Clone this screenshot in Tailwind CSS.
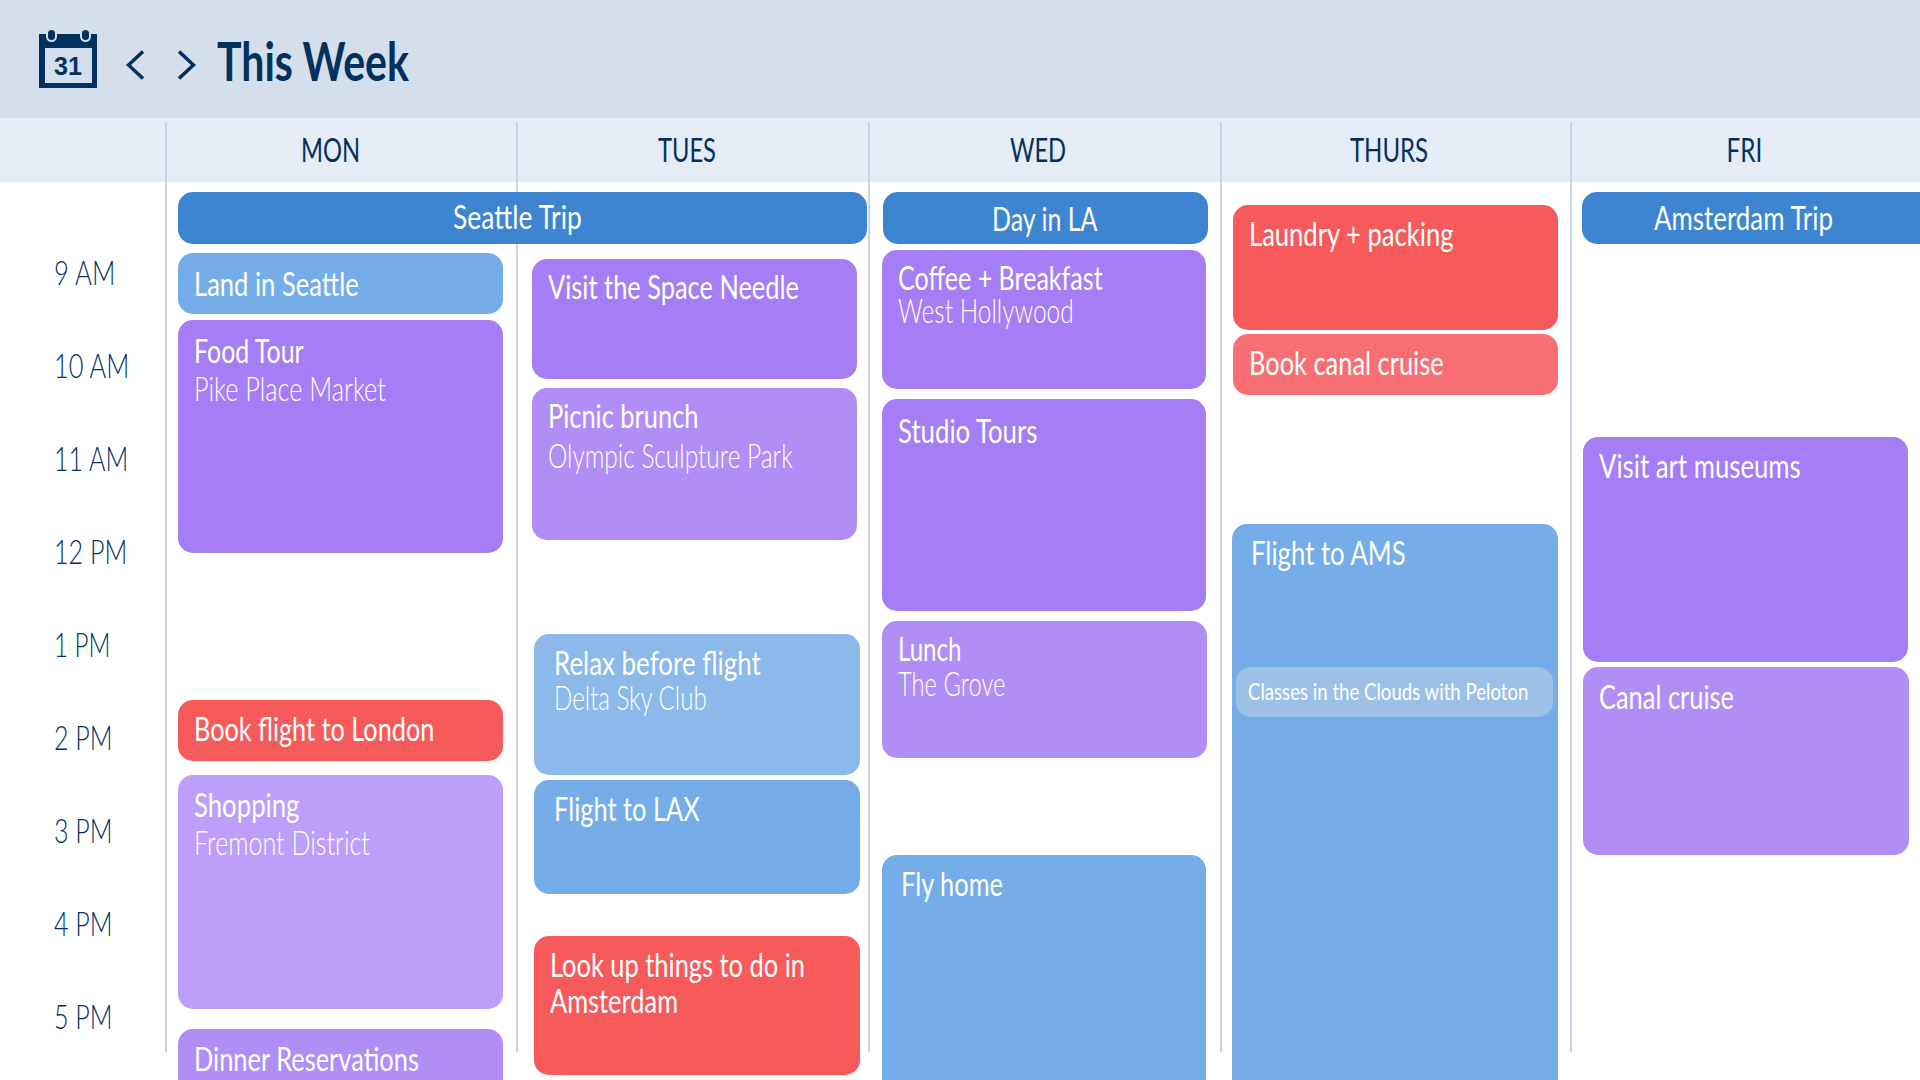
<!DOCTYPE html>
<html lang="en">
<head>
    <meta charset="UTF-8">
    <meta name="viewport" content="width=device-width, initial-scale=1.0">
    <title>This Week</title>
    <script src="https://cdn.jsdelivr.net/npm/@tailwindcss/browser@4"></script>
</head>
<body class="w-[1920px] h-[1080px] overflow-hidden bg-white relative font-['Lato','Open_Sans',sans-serif] text-[33px] leading-[36px] text-white">

    <!-- top bar -->
    <header class="h-[118px] bg-[#d5dfeb] flex items-center pl-[39px] text-[#03315f]">
        <svg width="58" height="60" viewBox="0 0 58 60">
            <rect x="0" y="5" width="58" height="54" fill="#03315f"/>
            <rect x="6" y="19" width="47" height="35" fill="#d5dfeb"/>
            <rect x="8" y="0" width="9" height="12" rx="4.5" fill="#03315f" stroke="#d5dfeb" stroke-width="2"/>
            <rect x="42" y="0" width="9" height="12" rx="4.5" fill="#03315f" stroke="#d5dfeb" stroke-width="2"/>
            <text x="29" y="46" text-anchor="middle" font-family="Liberation Sans" font-weight="700" font-size="25" fill="#03315f">31</text>
        </svg>
        <svg width="18" height="30" viewBox="0 0 18 30" class="ml-[29px] mt-[12px]"><path d="M17 1.5 2.5 15 17 28.5" fill="none" stroke="#03315f" stroke-width="3.5"/></svg>
        <svg width="18" height="30" viewBox="0 0 18 30" class="ml-[34px] mt-[12px]"><path d="M1 1.5 15.5 15 1 28.5" fill="none" stroke="#03315f" stroke-width="3.5"/></svg>
        <h1 class="ml-[21px] mt-[4px] text-[54px] leading-none font-bold whitespace-nowrap origin-left scale-x-[0.76]">This Week</h1>
    </header>

    <!-- day names -->
    <div class="h-[64px] bg-[#e5ecf5] grid grid-cols-[166px_351px_352px_352px_350px_349px] items-center text-center text-[#03315f] text-[32px]">
        <div></div>
        <div class="scale-x-[0.74] -translate-x-[11px]">MON</div>
        <div class="scale-x-[0.74] -translate-x-[6px]">TUES</div>
        <div class="scale-x-[0.74] -translate-x-[7px]">WED</div>
        <div class="scale-x-[0.75] -translate-x-[7px]">THURS</div>
        <div class="scale-x-[0.76] -translate-x-[1px]">FRI</div>
    </div>

    <!-- column rules -->
    <div class="absolute left-0 top-[122px] h-[930px] w-full grid grid-cols-[165px_351px_352px_352px_350px_350px] pointer-events-none">
        <div></div>
        <div class="border-l-2 border-[#c9d5e3]"></div>
        <div class="border-l-2 border-[#c9d5e3]"></div>
        <div class="border-l-2 border-[#c9d5e3]"></div>
        <div class="border-l-2 border-[#c9d5e3]"></div>
        <div class="border-l-2 border-[#c9d5e3]"></div>
    </div>

    <!-- calendar body -->
    <main class="relative grid grid-cols-[166px_351px_352px_352px_350px_349px] grid-rows-[62px_auto] h-[898px] overflow-hidden">

        <!-- hours -->
        <div class="row-span-2 pt-[66px] pl-[54px] text-[#03315f] text-[33px] font-light whitespace-nowrap">
            <div class="h-[93px] leading-[48px] origin-left scale-x-[0.78]">9 AM</div>
            <div class="h-[93px] leading-[48px] origin-left scale-x-[0.77]">10 AM</div>
            <div class="h-[93px] leading-[48px] origin-left scale-x-[0.76]">11 AM</div>
            <div class="h-[93px] leading-[48px] origin-left scale-x-[0.76]">12 PM</div>
            <div class="h-[93px] leading-[48px] origin-left scale-x-[0.73]">1 PM</div>
            <div class="h-[93px] leading-[48px] origin-left scale-x-[0.76]">2 PM</div>
            <div class="h-[93px] leading-[48px] origin-left scale-x-[0.76]">3 PM</div>
            <div class="h-[93px] leading-[48px] origin-left scale-x-[0.76]">4 PM</div>
            <div class="h-[93px] leading-[48px] origin-left scale-x-[0.76]">5 PM</div>
        </div>

        <!-- trip banners -->
        <div class="col-span-2 pt-[10px] pl-[12px]">
            <div class="w-[689px] h-[52px] pb-[4px] pr-[11px] rounded-[15px] bg-[#3d85d1] flex items-center justify-center"><span class="whitespace-nowrap scale-x-[0.8]">Seattle Trip</span></div>
        </div>
        <div class="pt-[10px] pl-[14px]">
            <div class="w-[325px] h-[52px] pb-[1px] pr-[1px] rounded-[15px] bg-[#3d85d1] flex items-center justify-center"><span class="whitespace-nowrap scale-x-[0.755]">Day in LA</span></div>
        </div>

        <!-- thursday -->
        <div class="row-span-2 col-start-5 row-start-1 pl-[12px] pt-[23px]">
            <div class="w-[325px] h-[125px] rounded-[15px] bg-[#f75a5b] pl-[16px] pt-[10px]"><p class="whitespace-nowrap origin-left scale-x-[0.775]">Laundry + packing</p></div>
            <div class="w-[325px] h-[61px] mt-[4px] rounded-[15px] bg-[#f76f72] pl-[16px] pt-[10px]"><p class="whitespace-nowrap origin-left scale-x-[0.77]">Book canal cruise</p></div>
            <div class="relative w-[326px] h-[600px] mt-[129px] -ml-[1px] rounded-[15px] bg-[#74ade8] pl-[19px] pt-[10px]">
                <p class="whitespace-nowrap origin-left scale-x-[0.78]">Flight to AMS</p>
                <div class="absolute left-[4px] top-[143px] w-[317px] h-[50px] rounded-[15px] bg-[#9dc1e6] pl-[12px] pt-[8px] text-[24px] leading-[32px]"><p class="whitespace-nowrap origin-left scale-x-[0.775]">Classes in the Clouds with Peloton</p></div>
            </div>
        </div>

        <!-- friday -->
        <div class="row-span-2 col-start-6 row-start-1 pl-[11px] pt-[10px]">
            <div class="w-[360px] h-[52px] pb-[2px] rounded-[15px] bg-[#3d85d1] pl-[72px] flex items-center"><span class="whitespace-nowrap origin-left scale-x-[0.785]">Amsterdam Trip</span></div>
            <div class="w-[325px] h-[225px] mt-[193px] ml-[1px] rounded-[15px] bg-[#a57ef5] pl-[16px] pt-[10px]"><p class="whitespace-nowrap origin-left scale-x-[0.78]">Visit art museums</p></div>
            <div class="w-[326px] h-[188px] mt-[5px] ml-[1px] rounded-[15px] bg-[#b18ef6] pl-[16px] pt-[11px]"><p class="whitespace-nowrap origin-left scale-x-[0.77]">Canal cruise</p></div>
        </div>

        <!-- monday -->
        <div class="col-start-2 row-start-2 pl-[12px] pt-[9px]">
            <div class="w-[325px] h-[61px] rounded-[15px] bg-[#74ade8] pl-[16px] pt-[12px]"><p class="whitespace-nowrap origin-left scale-x-[0.775]">Land in Seattle</p></div>
            <div class="w-[325px] h-[233px] mt-[6px] rounded-[15px] bg-[#a57ef5] pl-[16px] pt-[12px] whitespace-nowrap">
                <p class="origin-left scale-x-[0.755]">Food Tour</p>
                <p class="origin-left scale-x-[0.765] font-light mt-[2px]">Pike Place Market</p>
            </div>
            <div class="w-[325px] h-[61px] mt-[147px] rounded-[15px] bg-[#f75a5b] pl-[16px] pt-[10px]"><p class="whitespace-nowrap origin-left scale-x-[0.765]">Book flight to London</p></div>
            <div class="w-[325px] h-[234px] mt-[14px] rounded-[15px] bg-[#bd9ffb] pl-[16px] pt-[11px] whitespace-nowrap">
                <p class="origin-left scale-x-[0.78]">Shopping</p>
                <p class="origin-left scale-x-[0.76] font-light mt-[2px]">Fremont District</p>
            </div>
            <div class="w-[325px] h-[120px] mt-[20px] rounded-[15px] bg-[#b18ef6] pl-[16px] pt-[11px]"><p class="whitespace-nowrap origin-left scale-x-[0.77]">Dinner Reservations</p></div>
        </div>

        <!-- tuesday -->
        <div class="col-start-3 row-start-2 pl-[15px] pt-[15px]">
            <div class="w-[325px] h-[120px] rounded-[15px] bg-[#a57ef5] pl-[16px] pt-[9px]"><p class="whitespace-nowrap origin-left scale-x-[0.77]">Visit the Space Needle</p></div>
            <div class="w-[325px] h-[152px] mt-[9px] rounded-[15px] bg-[#b18ef6] pl-[16px] pt-[9px] whitespace-nowrap">
                <p class="origin-left scale-x-[0.77]">Picnic brunch</p>
                <p class="origin-left scale-x-[0.74] font-light mt-[4px]">Olympic Sculpture Park</p>
            </div>
            <div class="w-[326px] h-[141px] mt-[94px] ml-[2px] rounded-[15px] bg-[#8ab9ea] pl-[20px] pt-[11px] whitespace-nowrap leading-[35px]">
                <p class="origin-left scale-x-[0.785]">Relax before flight</p>
                <p class="origin-left scale-x-[0.73] font-light">Delta Sky Club</p>
            </div>
            <div class="w-[326px] h-[114px] mt-[5px] ml-[2px] rounded-[15px] bg-[#74ade8] pl-[20px] pt-[10px]"><p class="whitespace-nowrap origin-left scale-x-[0.77]">Flight to LAX</p></div>
            <div class="w-[326px] h-[139px] mt-[42px] ml-[2px] rounded-[15px] bg-[#f75a5b] pl-[16px] pt-[10px] whitespace-nowrap">
                <p class="origin-left scale-x-[0.77]">Look up things to do in</p>
                <p class="origin-left scale-x-[0.77]">Amsterdam</p>
            </div>
        </div>

        <!-- wednesday -->
        <div class="col-start-4 row-start-2 pl-[13px] pt-[6px]">
            <div class="w-[324px] h-[139px] rounded-[15px] bg-[#a57ef5] pl-[16px] pt-[11px] whitespace-nowrap leading-[33px]">
                <p class="origin-left scale-x-[0.76]">Coffee + Breakfast</p>
                <p class="origin-left scale-x-[0.74] font-light">West Hollywood</p>
            </div>
            <div class="w-[324px] h-[212px] mt-[10px] rounded-[15px] bg-[#a57ef5] pl-[16px] pt-[13px]"><p class="whitespace-nowrap origin-left scale-x-[0.78]">Studio Tours</p></div>
            <div class="w-[325px] h-[137px] mt-[10px] rounded-[15px] bg-[#b18ef6] pl-[16px] pt-[10px] whitespace-nowrap leading-[35px]">
                <p class="origin-left scale-x-[0.73]">Lunch</p>
                <p class="origin-left scale-x-[0.72] font-light">The Grove</p>
            </div>
            <div class="w-[324px] h-[400px] mt-[97px] rounded-[15px] bg-[#74ade8] pl-[19px] pt-[10px]"><p class="whitespace-nowrap origin-left scale-x-[0.77]">Fly home</p></div>
        </div>
    </main>
</body>
</html>
